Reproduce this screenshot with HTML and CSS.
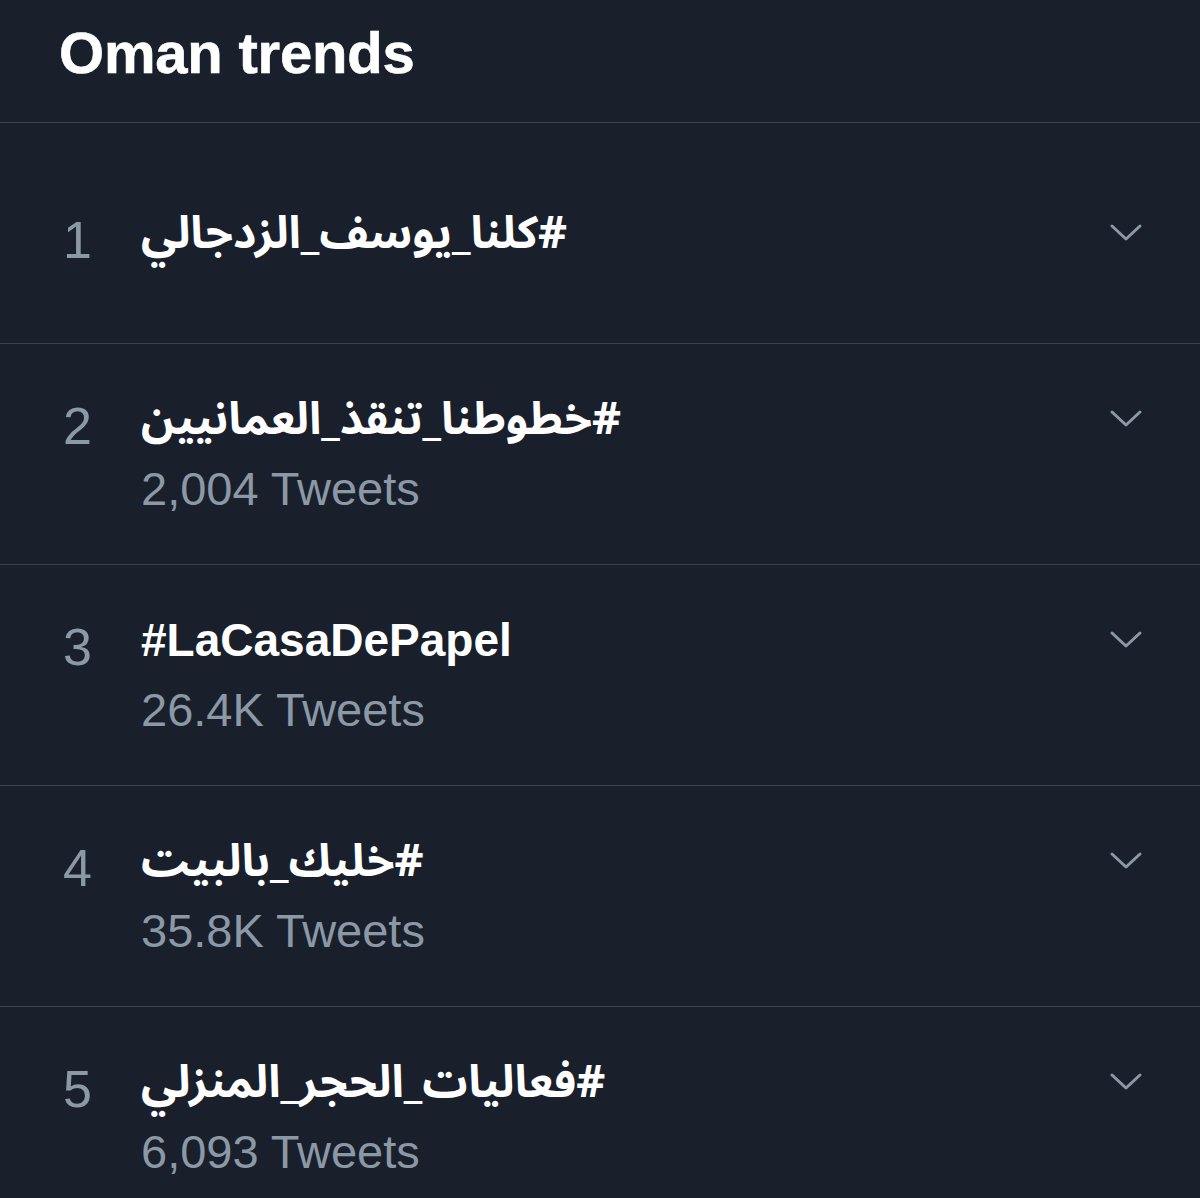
FILE: index.html
```html
<!DOCTYPE html>
<html lang="en">
<head>
<meta charset="utf-8">
<title>Oman trends</title>
<link rel="stylesheet" href="styles.css">
</head>
<body>
<main class="panel">
  <header class="panel-header">
    <h1 class="panel-title">Oman trends</h1>
  </header>
  <ol class="trends">
    <li class="trend">
      <div class="trend-grid">
        <span class="trend-rank">1</span>
        <span class="trend-name"><span class="ar" dir="rtl">#كلنا_يوسف_الزدجالي</span></span>
        <span class="trend-more"><svg viewBox="0 0 34 20" width="34" height="20"><polyline points="3,3 17,16 31,3"/></svg></span>
      </div>
    </li>
    <li class="trend">
      <div class="trend-grid">
        <span class="trend-rank">2</span>
        <span class="trend-name"><span class="ar" dir="rtl">#خطوطنا_تنقذ_العمانيين</span></span>
        <span class="trend-more"><svg viewBox="0 0 34 20" width="34" height="20"><polyline points="3,3 17,16 31,3"/></svg></span>
        <span class="trend-count">2,004 Tweets</span>
      </div>
    </li>
    <li class="trend">
      <div class="trend-grid">
        <span class="trend-rank">3</span>
        <span class="trend-name">#LaCasaDePapel</span>
        <span class="trend-more"><svg viewBox="0 0 34 20" width="34" height="20"><polyline points="3,3 17,16 31,3"/></svg></span>
        <span class="trend-count">26.4K Tweets</span>
      </div>
    </li>
    <li class="trend">
      <div class="trend-grid">
        <span class="trend-rank">4</span>
        <span class="trend-name"><span class="ar" dir="rtl">#خليك_بالبيت</span></span>
        <span class="trend-more"><svg viewBox="0 0 34 20" width="34" height="20"><polyline points="3,3 17,16 31,3"/></svg></span>
        <span class="trend-count">35.8K Tweets</span>
      </div>
    </li>
    <li class="trend">
      <div class="trend-grid">
        <span class="trend-rank">5</span>
        <span class="trend-name"><span class="ar" dir="rtl">#فعاليات_الحجر_المنزلي</span></span>
        <span class="trend-more"><svg viewBox="0 0 34 20" width="34" height="20"><polyline points="3,3 17,16 31,3"/></svg></span>
        <span class="trend-count">6,093 Tweets</span>
      </div>
    </li>
  </ol>
</main>
</body>
</html>
```
FILE: styles.css
```css
html, body {
  margin: 0;
  padding: 0;
  background: #19202c;
}
body {
  font-family: "Liberation Sans", Arial, sans-serif;
  color: #ffffff;
  height: 1198px;
  overflow: hidden;
}
.panel-header {
  height: 123px;
  box-sizing: border-box;
  padding-left: 59px;
  padding-bottom: 16px;
  border-bottom: 1px solid #3a4150;
  display: flex;
  align-items: center;
}
.panel-title {
  margin: 0;
  font-size: 58px;
  font-weight: 700;
  letter-spacing: -0.2px;
  line-height: 1;
  -webkit-text-stroke: 0.6px #ffffff;
}
.trends {
  list-style: none;
  margin: 0;
  padding: 0;
}
.trend {
  height: 221px;
  box-sizing: border-box;
  border-bottom: 1px solid #3a4150;
  display: flex;
  align-items: center;
}
.trend-grid {
  width: 100%;
  display: grid;
  grid-template-columns: 52px 1fr 34px;
  column-gap: 49px;
  padding: 0 57px 0 40px;
  grid-template-rows: 70px;
  grid-auto-rows: 70px;
  align-items: center;
}
.trend-rank {
  grid-column: 1;
  grid-row: 1;
  text-align: right;
  font-size: 52px;
  font-weight: 400;
  color: #8b98a5;
  line-height: 70px;
  padding-top: 14px;
}
.trend-name {
  grid-column: 2;
  grid-row: 1;
  font-size: 46px;
  font-weight: 700;
  line-height: 70px;
  white-space: nowrap;
}
.ar {
  display: inline-block;
  font-family: "Noto Sans Arabic", "DejaVu Sans", sans-serif;
  font-size: 45px;
  font-weight: 700;
}
.trend-more {
  grid-column: 3;
  grid-row: 1;
  display: flex;
  align-items: center;
  justify-content: center;
}
.trend-more svg {
  display: block;
}
.trend-more polyline {
  fill: none;
  stroke: #8b98a5;
  stroke-width: 3;
  stroke-linecap: round;
  stroke-linejoin: round;
}
.trend-count {
  grid-column: 2;
  grid-row: 2;
  font-size: 47px;
  font-weight: 400;
  color: #8b98a5;
  line-height: 70px;
}
```
